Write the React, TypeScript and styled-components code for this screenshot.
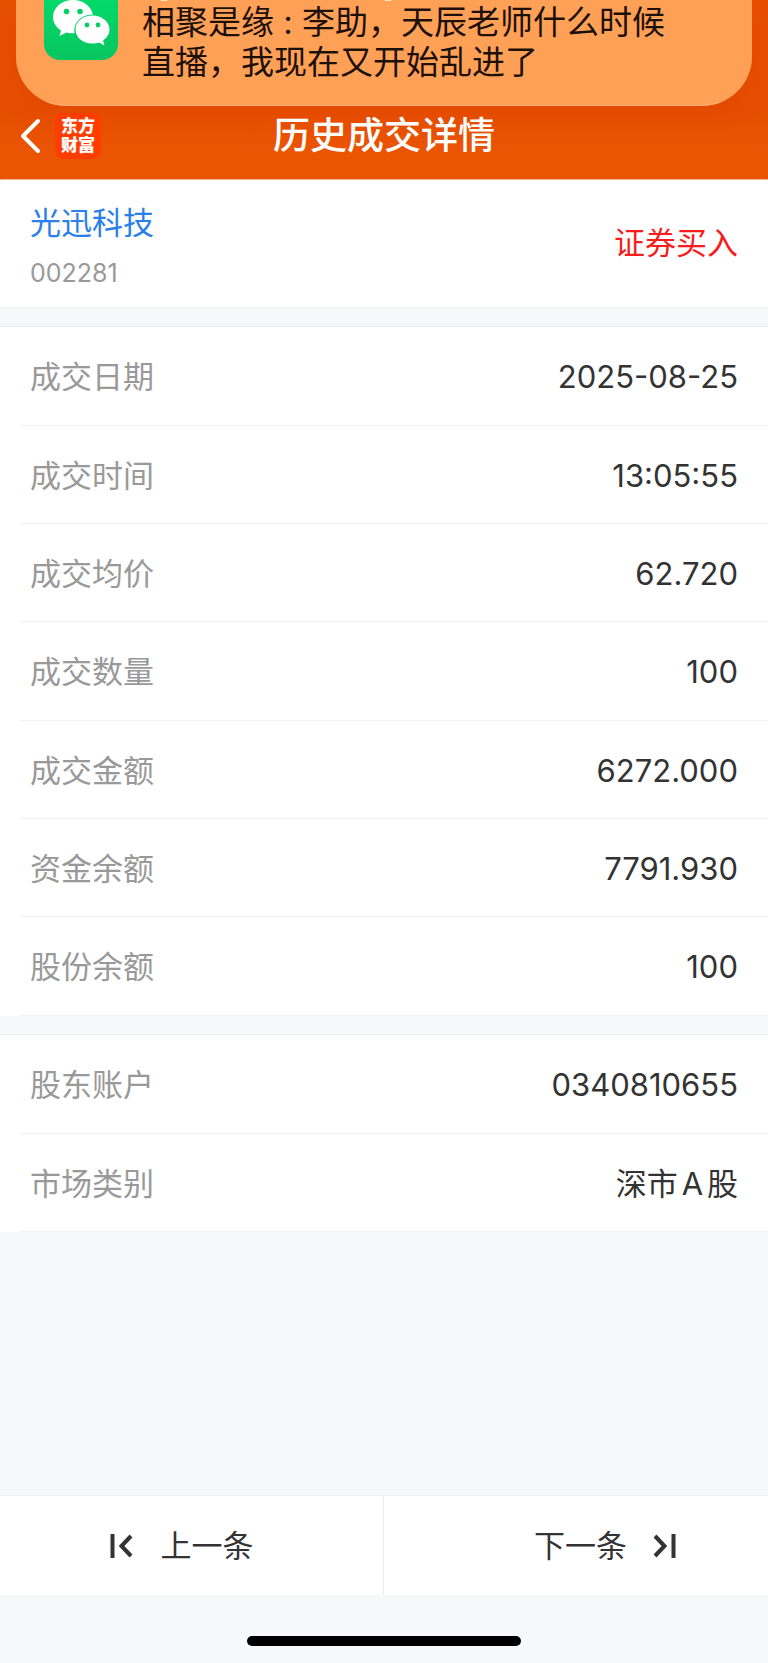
import React from "react";
import styled, { createGlobalStyle, css } from "styled-components";

const GlobalStyle = createGlobalStyle`
  * { box-sizing: border-box; }
  body {
    margin: 0;
    background: #f6f8fa;
    font-family: Inter, "Noto Sans CJK SC", sans-serif;
    color: #333;
  }
`;

const Page = styled.div`
  display: flex;
  flex-direction: column;
  min-height: 100vh;
`;

const Header = styled.header`
  display: flex;
  flex-direction: column;
  background: linear-gradient(#e85100 0, #e64e00 110px, #ea5504 155px);
  border-bottom: 1px solid #f7b48a;
`;

const Notice = styled.aside`
  display: flex;
  gap: 24px;
  margin: 0 16px;
  padding: 0 28px 23px;
  border-bottom: 1px solid #ffaf73;
  border-radius: 0 0 50px 50px;
  background: #ffa057;
  box-shadow: 0 4px 24px rgba(215, 60, 0, 0.3);
`;

const NoticeIcon = styled.svg`
  flex: none;
  display: block;
  width: 74px;
  height: 60px;
`;

const NoticeBody = styled.div`
  flex: 1;
`;

const EmojiEdges = styled.svg`
  display: block;
  width: 260px;
  height: 2px;
`;

const NoticeText = styled.p`
  margin: 0;
  max-width: 540px;
  font-size: 33px;
  line-height: 40px;
  color: #1c1008;
`;

const TitleBar = styled.div`
  display: grid;
  grid-template-columns: 1fr auto 1fr;
  align-items: center;
  height: 73px;
  padding: 0 20px 13px;
`;

const TitleLeft = styled.div`
  display: flex;
  align-items: center;
  gap: 14px;
`;

const BackButton = styled.button`
  display: flex;
  padding: 0;
  border: 0;
  background: none;
  color: #fff;
`;

const BrandLink = styled.a`
  display: flex;
  flex-direction: column;
  align-items: center;
  justify-content: center;
  width: 46px;
  height: 46px;
  border-radius: 8px;
  background: #ff3d00;
  color: #fff;
  font-size: 17px;
  font-weight: 900;
  line-height: 19px;
  text-decoration: none;
`;

const Title = styled.h1`
  margin: 0;
  font-size: 37px;
  line-height: 48px;
  font-weight: 500;
  color: #fff;
`;

const Stock = styled.section`
  display: flex;
  align-items: center;
  justify-content: space-between;
  padding: 21px 30px 17px;
  border-bottom: 1px solid #f0f1f2;
  border-radius: 6px 6px 0 0;
  background: #fff;
`;

const StockName = styled.a`
  display: block;
  font-size: 31px;
  line-height: 44px;
  color: #2b7fe8;
  text-decoration: none;
`;

const StockCode = styled.div`
  margin-top: 11px;
  font-size: 25px;
  line-height: 34px;
  color: #999;
`;

const Side = styled.strong`
  padding-bottom: 6px;
  font-size: 31px;
  line-height: 44px;
  font-weight: 400;
  color: #f91c1c;
`;

const Group = styled.section`
  margin-top: 18px;
  padding-left: 20px;
  border-top: 1px solid #eceded;
  background: #fff;
`;

const Table = styled.table`
  width: 100%;
  border-spacing: 0;
`;

const Row = styled.tr`
  height: 98px;

  &:nth-child(3n + 1) {
    height: 99px;
  }
`;

const cell = css`
  padding: 2px 0 0;
  border-bottom: 1px solid #f1f2f2;
  font-size: 31px;
  line-height: 44px;
  font-weight: 400;
`;

const Label = styled.th`
  ${cell}
  padding-left: 10px;
  text-align: left;
  color: #999;
`;

const Value = styled.td`
  ${cell}
  padding-right: 30px;
  text-align: right;
  text-autospace: normal;
`;

const Footer = styled.footer`
  margin-top: auto;
`;

const Pager = styled.nav`
  display: grid;
  grid-template-columns: 1fr 1fr;
  border-top: 1px solid #eff0f2;
  background: #fff;
`;

const PagerButton = styled.button<{ $side: "start" | "end" }>`
  display: flex;
  align-items: center;
  justify-content: center;
  gap: ${(p) => (p.$side === "start" ? "28px" : "26px")};
  height: 99px;
  border: 0;
  border-right: ${(p) => (p.$side === "start" ? "1px solid #e9eaec" : "0")};
  padding: ${(p) => (p.$side === "start" ? "0 20px 0 0" : "0 0 0 58px")};
  background: none;
  color: #333;
  font-family: inherit;
  font-size: 31px;
  line-height: 44px;
`;

const HomeArea = styled.div`
  display: flex;
  justify-content: center;
  padding: 41px 0 17px;
`;

const HomeBar = styled.div`
  width: 274px;
  height: 10px;
  border-radius: 5px;
  background: #000;
`;

const trade: [string, string][] = [
  ["成交日期", "2025-08-25"],
  ["成交时间", "13:05:55"],
  ["成交均价", "62.720"],
  ["成交数量", "100"],
  ["成交金额", "6272.000"],
  ["资金余额", "7791.930"],
  ["股份余额", "100"],
];

const account: [string, string][] = [
  ["股东账户", "0340810655"],
  ["市场类别", "深市A股"],
];

function WeChatIcon() {
  return (
    <NoticeIcon viewBox="0 0 74 60" role="img" aria-label="微信">
      <defs>
        <linearGradient id="wechat" x1="0" y1="0" x2="0" y2="1">
          <stop offset="0" stopColor="#02de6c" />
          <stop offset="1" stopColor="#07c560" />
        </linearGradient>
      </defs>
      <rect y="-14" width="74" height="74" rx="16" fill="url(#wechat)" />
      <path
        fill="#fff"
        d="M29 0C18 0 9 7.500 9 17c0 5.500 3 10 8 13.500L15.500 36l7-3.500c3 .8 5 1 8 .8C29 23 37 14.500 49 14.500 47 6 39 0 29 0Z"
      />
      <path
        fill="#fff"
        d="M48.500 15.500C39 15.500 31.500 21.500 31.500 29.500S39 43.500 48.500 43.500c2.500 0 4.500-.3 6.500-1l5.500 3-1.500-5c4-3 6.500-6.500 6.500-11 0-8-8-14-17-14Z"
      />
      <g fill="#05cf66">
        <circle cx="22.500" cy="11.500" r="2.800" />
        <circle cx="36" cy="11.500" r="2.800" />
        <circle cx="43" cy="25" r="2.400" />
        <circle cx="54" cy="25" r="2.400" />
      </g>
    </NoticeIcon>
  );
}

function Records({ rows }: { rows: [string, string][] }) {
  return (
    <Group>
      <Table>
        <tbody>
          {rows.map(([label, value]) => (
            <Row key={label}>
              <Label scope="row">{label}</Label>
              <Value>{value}</Value>
            </Row>
          ))}
        </tbody>
      </Table>
    </Group>
  );
}

function StepIcon({ next }: { next?: boolean }) {
  return (
    <svg width="23" height="24" viewBox="0 0 23 24" fill="none" stroke="#333" strokeWidth="4">
      {next ? (
        <path d="M2 2l9.500 10L2 22M20.500 0v24" />
      ) : (
        <path d="M21 2l-9.500 10L21 22M2.500 0v24" />
      )}
    </svg>
  );
}

export default function App() {
  return (
    <Page>
      <GlobalStyle />
      <Header>
        <Notice>
          <WeChatIcon />
          <NoticeBody>
            <EmojiEdges viewBox="0 0 260 2" aria-hidden="true">
              <g fill="#ffcf1f">
                <ellipse cx="22" cy="-2" rx="7" ry="3" />
                <ellipse cx="246" cy="-2" rx="7" ry="3" />
              </g>
              <g fill="#fff6c8">
                <ellipse cx="22" cy="-1" rx="4" ry="2" />
                <ellipse cx="246" cy="-1" rx="4" ry="2" />
              </g>
            </EmojiEdges>
            <NoticeText>相聚是缘 : 李助，天辰老师什么时候直播，我现在又开始乱进了</NoticeText>
          </NoticeBody>
        </Notice>
        <TitleBar>
          <TitleLeft>
            <BackButton aria-label="返回">
              <svg width="21" height="36" viewBox="0 0 21 36" fill="none" stroke="currentColor" strokeWidth="4" strokeLinecap="round" strokeLinejoin="round">
                <path d="M18 3L3 18l15 15" />
              </svg>
            </BackButton>
            <BrandLink href="#home">
              <span>东方</span>
              <span>财富</span>
            </BrandLink>
          </TitleLeft>
          <Title>历史成交详情</Title>
        </TitleBar>
      </Header>
      <main>
        <Stock>
          <div>
            <StockName href="#stock">光迅科技</StockName>
            <StockCode>002281</StockCode>
          </div>
          <Side>证券买入</Side>
        </Stock>
        <Records rows={trade} />
        <Records rows={account} />
      </main>
      <Footer>
        <Pager>
          <PagerButton $side="start">
            <StepIcon />
            上一条
          </PagerButton>
          <PagerButton $side="end">
            下一条
            <StepIcon next />
          </PagerButton>
        </Pager>
        <HomeArea>
          <HomeBar />
        </HomeArea>
      </Footer>
    </Page>
  );
}
